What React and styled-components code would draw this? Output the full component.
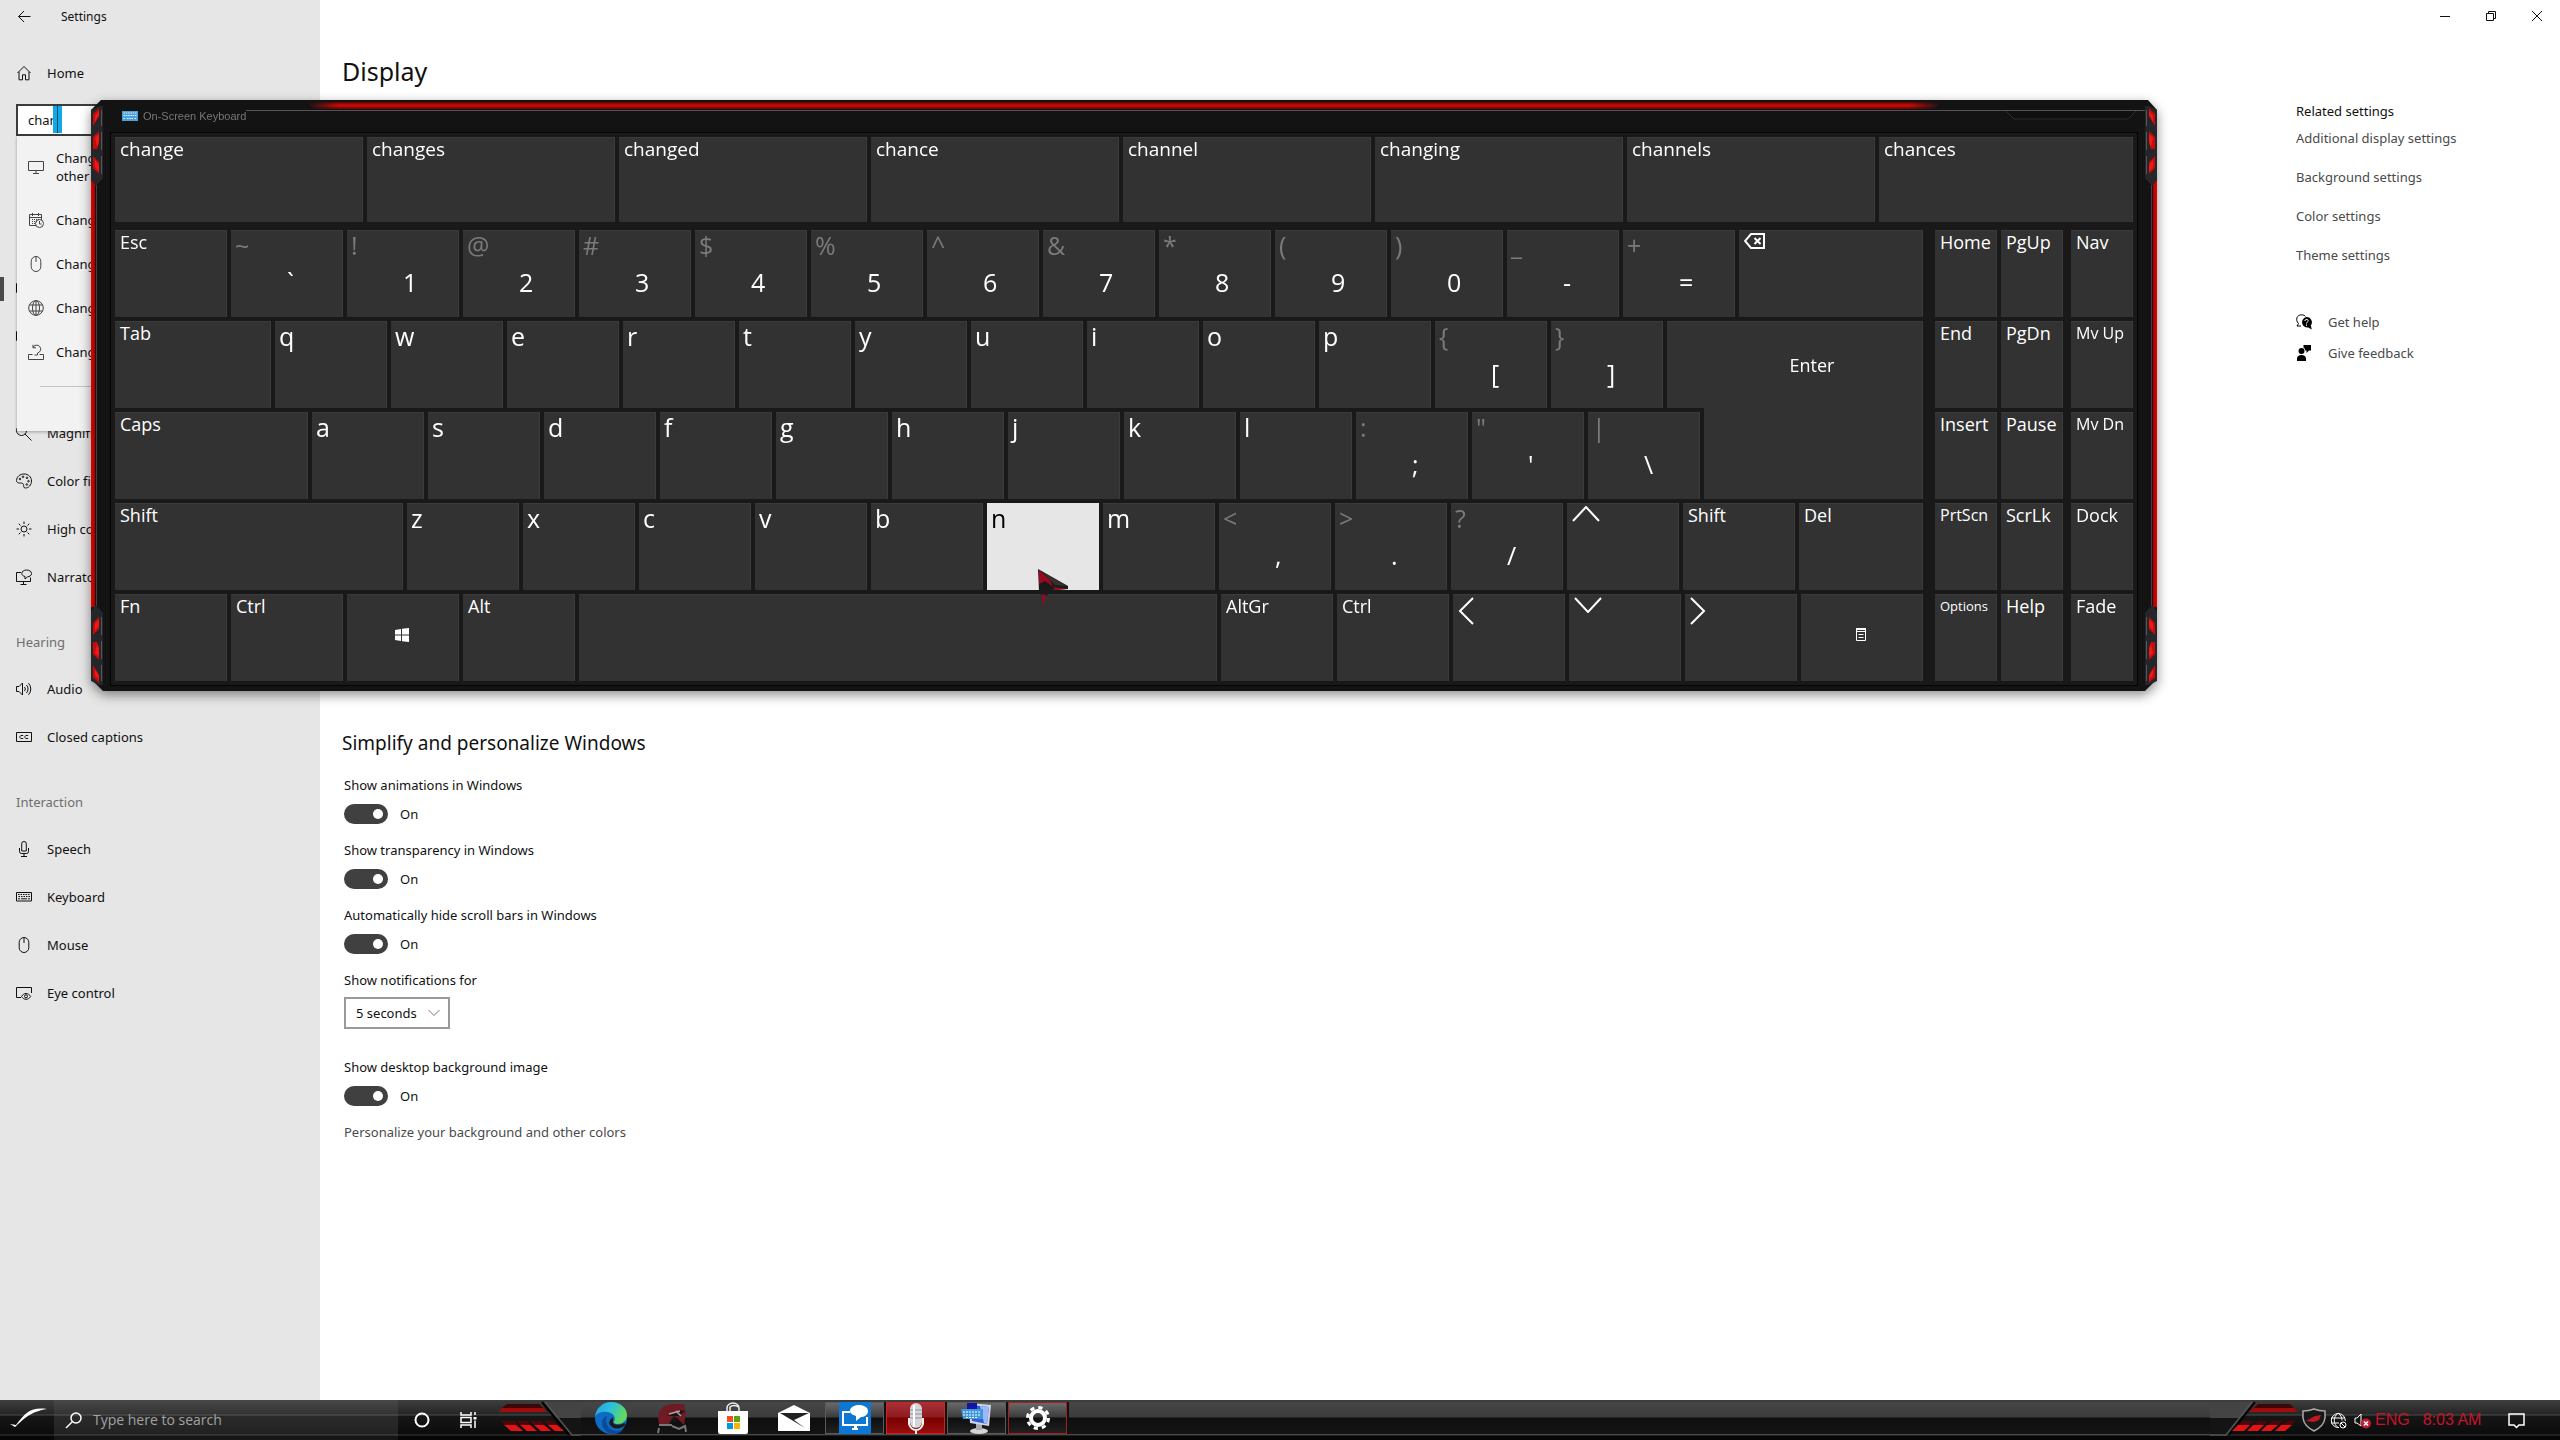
import styled, { createGlobalStyle } from "styled-components";

const GlobalStyle = createGlobalStyle`
  * {
    box-sizing: border-box;
  }
  body {
    margin: 0;
    background: #fff;
    color: #111;
    font-family: "Noto Sans", "Open Sans", sans-serif;
    font-size: 13px;
    line-height: 20px;
  }
  button, input, select {
    font: inherit;
    color: inherit;
    margin: 0;
    padding: 0;
    border: 0;
    background: none;
    border-radius: 0;
  }
  a {
    color: #4a4a4a;
    text-decoration: none;
  }
  h1, h2, h3 {
    margin: 0;
    font-weight: 400;
  }
`;

/* ---------- page ---------- */

const Desktop = styled.div`
  position: relative;
  display: flex;
  flex-direction: column;
  min-height: 100vh;
  overflow: hidden;
`;

const SettingsWindow = styled.div`
  flex: 1;
  display: flex;
`;

const Line = styled.svg`
  display: block;
  flex: none;
  width: ${(p) => p.$w || 16}px;
  height: ${(p) => p.$h || 16}px;
  fill: none;
  stroke: currentColor;
  stroke-width: ${(p) => p.$stroke || 1};
`;

/* ---------- sidebar ---------- */

const Sidebar = styled.aside`
  flex: none;
  width: 320px;
  background: #e6e6e6;
`;

const SidebarTitle = styled.div`
  display: flex;
  align-items: center;
  gap: 29px;
  height: 34px;
  padding-left: 16px;
  font-size: 12px;
`;

const BackButton = styled.button`
  width: 16px;
  height: 16px;
`;

const NavItem = styled.a`
  position: relative;
  display: flex;
  align-items: center;
  gap: 15px;
  height: 48px;
  padding-left: 16px;
  color: #111;
  ${(p) =>
    p.$current &&
    `
    &::before {
      content: "";
      position: absolute;
      left: 0;
      top: 12px;
      width: 4px;
      height: 24px;
      background: #4a4a4a;
    }
  `}
`;

const HomeLink = styled(NavItem)`
  margin-top: 15px;
`;

const NavHeading = styled.h3`
  height: 64px;
  padding: 31px 0 0 16px;
  color: #6e6e6e;
  font-size: 13px;
`;

const Nav = styled.nav`
  margin-top: 129px;
`;

const SearchArea = styled.div`
  position: relative;
  margin: 7px 16px 0;
`;

const SearchInput = styled.input`
  display: block;
  width: 100%;
  height: 32px;
  padding: 0 10px;
  border: 2px solid #3c3c3c;
  background: #fff;
  outline: none;
`;

const Selection = styled.span`
  position: absolute;
  left: 37px;
  top: 2px;
  width: 9px;
  height: 27px;
  background: linear-gradient(90deg, #12a7e6 4px, #0b5070 4px, #0b5070 5px, #12a7e6 5px);
`;

const Suggestions = styled.div`
  position: absolute;
  z-index: 1;
  top: 32px;
  left: 1px;
  right: 0;
  height: 295px;
  padding-top: 5px;
  background: #f2f2f2;
  box-shadow: 0 1px 3px rgba(0, 0, 0, 0.3);
`;

const Suggestion = styled.a`
  display: flex;
  align-items: center;
  gap: 12px;
  height: ${(p) => (p.$tall ? 52 : 44)}px;
  padding-left: 11px;
  color: #111;
  line-height: 18px;
  &:nth-child(2) {
    margin-top: 5px;
  }
  svg {
    color: #444;
  }
`;

const SuggestionRule = styled.hr`
  margin: 12px 24px 0 23px;
  border: 0;
  border-top: 1px solid #c4c4c4;
`;

/* ---------- settings content ---------- */

const Content = styled.main`
  flex: 1;
  display: flex;
  flex-direction: column;
`;

const CaptionBar = styled.div`
  display: flex;
  justify-content: flex-end;
  height: 32px;
`;

const CaptionButton = styled.button`
  display: flex;
  align-items: center;
  justify-content: center;
  width: 46px;
`;

const Columns = styled.div`
  flex: 1;
  display: flex;
  justify-content: space-between;
`;

const Settings = styled.section`
  padding: 21px 0 0 22px;
`;

const PageTitle = styled.h1`
  font-size: 25px;
  line-height: 36px;
`;

const GroupTitle = styled.h2`
  margin-top: 640px;
  margin-bottom: 18px;
  font-size: 19px;
  line-height: 28px;
`;

const Fields = styled.div`
  padding-left: 2px;
`;

const Field = styled.div`
  margin-bottom: ${(p) => p.$after || 16}px;
`;

const FieldLabel = styled.label`
  display: block;
  margin-bottom: ${(p) => p.$gap || 9}px;
`;

const ToggleRow = styled.div`
  display: flex;
  align-items: center;
  gap: 12px;
  height: 20px;
`;

const Toggle = styled.input`
  appearance: none;
  width: 44px;
  height: 20px;
  border-radius: 10px;
  background: #404040;
  display: flex;
  align-items: center;
  justify-content: flex-end;
  padding-right: 5px;
  &::before {
    content: "";
    width: 10px;
    height: 10px;
    border-radius: 50%;
    background: #fff;
  }
`;

const Drop = styled.div`
  display: flex;
  align-items: center;
  width: 106px;
  svg {
    margin-left: -22px;
    color: #777;
    pointer-events: none;
  }
`;

const Select = styled.select`
  appearance: none;
  width: 106px;
  height: 32px;
  padding-left: 10px;
  border: 2px solid #999;
`;

const Related = styled.aside`
  display: flex;
  flex-direction: column;
  gap: 19px;
  width: 264px;
  padding-top: 69px;
`;

const RelatedTitle = styled.h3`
  margin-bottom: -12px;
  font-size: 13px;
`;

const HelpLinks = styled.div`
  display: flex;
  flex-direction: column;
  gap: 11px;
  margin-top: 28px;
  a {
    display: flex;
    align-items: center;
    gap: 16px;
  }
  svg {
    color: #000;
  }
`;

/* ---------- on-screen keyboard ---------- */

const KeyboardWindow = styled.div`
  position: absolute;
  z-index: 2;
  top: 100px;
  left: 91px;
  right: 403px;
  font-family: "Open Sans", "Noto Sans", sans-serif;
  filter: drop-shadow(0 4px 6px rgba(0, 0, 0, 0.45));
`;

const Frame = styled.div`
  padding: 0 19px 5px;
  background: #131313;
  clip-path: polygon(
    10px 0,
    calc(100% - 9px) 0,
    100% 10px,
    100% calc(100% - 12px),
    calc(100% - 12px) 100%,
    12px 100%,
    0 calc(100% - 12px),
    0 10px
  );
`;

const TopGlow = styled.div`
  position: absolute;
  top: 2px;
  left: 216px;
  right: 216px;
  height: 7px;
  background: linear-gradient(#5c0606, #d20a05 50%, #5c0606);
  clip-path: polygon(0 0, 100% 0, calc(100% - 8px) 100%, 8px 100%);
  &::after {
    content: "";
    position: absolute;
    inset: 0;
    background: linear-gradient(90deg, #131313, transparent 32px, transparent calc(100% - 32px), #131313);
  }
`;

const TopRule = styled.div`
  position: absolute;
  top: 10px;
  left: 155px;
  right: 12px;
  height: 1px;
  background: #555059;
`;

const SideGlow = styled.div`
  position: absolute;
  top: 80px;
  bottom: 84px;
  ${(p) => (p.$right ? "right" : "left")}: 0;
  width: 7px;
  background: linear-gradient(
    ${(p) => (p.$right ? 270 : 90)}deg,
    #e00000 0,
    #a80000 4px,
    #131313 4px,
    #131313 5px,
    #4a4043 5px,
    #4a4043 6px,
    #131313 6px
  );
`;

const Hazard = styled.svg`
  position: absolute;
  width: 12px;
  height: 80px;
  ${(p) => (p.$bottom ? "bottom: 6px;" : "top: 6px;")}
  ${(p) => (p.$right ? "right: 0;" : "left: 0;")}
  transform: scale(${(p) => (p.$right ? -1 : 1)}, ${(p) => (p.$bottom ? -1 : 1)});
`;

const TitleNotch = styled.svg`
  position: absolute;
  top: 10px;
  right: 21px;
  width: 130px;
  height: 12px;
`;

const KeyboardTitle = styled.div`
  display: flex;
  align-items: center;
  gap: 5px;
  height: 32px;
  padding-left: 12px;
  color: #777;
  font-family: "Liberation Sans", Arial, sans-serif;
  font-size: 11px;
`;

const KeyArea = styled.div`
  padding: 4px;
  border: 1px solid #050505;
  background: #191919;
`;

const Row = styled.div`
  display: grid;
  grid-template-columns: ${(p) => p.$cols};
  grid-auto-rows: ${(p) => p.$height || 87}px;
  gap: 4px;
`;

const PredictionRow = styled(Row)`
  margin-bottom: 8px;
`;

const Board = styled.div`
  display: flex;
  gap: 8px;
`;

const MainKeys = styled.div`
  flex: 1;
  display: flex;
  flex-direction: column;
  gap: 4px;
  margin-right: 4px;
`;

const SidePad = styled(Row)`
  flex: none;
`;

const Key = styled.button`
  position: relative;
  display: flex;
  flex-direction: column;
  align-items: ${(p) => (p.$center ? "center" : "flex-start")};
  justify-content: ${(p) => (p.$center ? "center" : "flex-start")};
  padding: ${(p) => (p.$center ? "0 2px 6px 0" : "0 0 0 5px")};
  background: ${(p) => (p.$pressed ? "#e6e6e6" : "#323232")};
  color: ${(p) => (p.$pressed ? "#000" : "#fff")};
  box-shadow: ${(p) => (p.$pressed ? "none" : "inset 0 1px #3b3b3b, inset -1px 0 #3b3b3b")};
  font-size: ${(p) => p.$size || 18}px;
  line-height: 24px;
  text-align: left;
  white-space: nowrap;
`;

const CharKey = styled(Key)`
  padding-left: 4px;
  font-size: 25px;
  line-height: 30px;
`;

const Shifted = styled.span`
  color: #7b7b7b;
`;

const Base = styled.span`
  height: 30px;
  margin-top: 7px;
  padding-left: 52px;
`;

// the lower half reaches into the row below
const EnterKey = styled(Key)`
  padding: 0 0 0 34px;
  &::after {
    content: "";
    position: absolute;
    top: 100%;
    right: 0;
    width: calc(100% - 37px);
    height: 91px;
    background: #323232;
    box-shadow: inset -1px 0 #3b3b3b;
  }
`;

const Pointer = styled.svg`
  position: absolute;
  z-index: 3;
  top: 569px;
  left: 1038px;
  width: 31px;
  height: 38px;
`;

/* ---------- taskbar ---------- */

const Taskbar = styled.footer`
  position: relative;
  display: flex;
  align-items: stretch;
  height: 40px;
  background: linear-gradient(#3e3e3e 0, #262626 14px, #4c4c4c 15px, #161616 16px, #0c0c0c 34px, #3a3a3a 35px, #060606 36px);
  color: #fff;
`;

const StartButton = styled.button`
  width: 54px;
  padding-left: 4px;
`;

const TaskSearch = styled.label`
  display: flex;
  align-items: center;
  gap: 11px;
  width: 344px;
  padding-left: 11px;
  background: linear-gradient(#484848 0, #343434 14px, #585858 15px, #2a2a2a 16px, #222 34px, #484848 35px, #161616 36px);
  font-family: "Open Sans", "Noto Sans", sans-serif;
  input {
    flex: 1;
    font-size: 14px;
    outline: none;
  }
  input::placeholder {
    color: #a2a2a2;
    opacity: 1;
  }
`;

const TaskButton = styled.button`
  display: flex;
  align-items: center;
  justify-content: center;
  width: 47px;
`;

const Stripes = styled.svg`
  flex: none;
  width: ${(p) => p.$w}px;
  height: 40px;
`;

const Apps = styled.div`
  flex: 1;
  display: flex;
  margin: 2px 0 5px;
  border-bottom: 1px solid #4a4a4a;
  background: linear-gradient(#464646 0, #3c3c3c 15px, #0e0e0e 16px, #141414 100%);
`;

const App32 = styled.button`
  display: flex;
  align-items: center;
  justify-content: center;
  width: 61px;
  border-right: 2px solid transparent;
  svg {
    width: 32px;
    height: 32px;
  }
  ${(p) =>
    p.$open &&
    `
    border-right-color: #101010;
    box-shadow: inset 0 0 0 1px #5a5a5a;
    background: linear-gradient(#6c6c6c 0, #3c3c3c 15px, #0e0e0e 16px, #222 100%);
  `}
  ${(p) =>
    p.$alert &&
    `
    box-shadow: inset 0 0 0 1px #c22;
    background: linear-gradient(#a83238 0, #8e1a1e 15px, #780000 16px, #9c1010 100%);
  `}
  ${(p) => p.$active && `box-shadow: inset 0 0 0 1px #a32020;`}
`;

const Tray = styled.div`
  display: flex;
  align-items: center;
  width: 258px;
  color: #c4142a;
  font-family: "Liberation Sans", Arial, sans-serif;
  font-size: 16px;
  svg {
    color: #fff;
  }
`;

const TrayText = styled.span`
  margin-left: ${(p) => p.$gap}px;
`;

const TrayIcon = styled.button`
  margin-left: ${(p) => p.$gap}px;
`;

/* ---------- icons ---------- */

const icons = {
  home: <path d="M1.5 8 8 1.5 14.5 8M3 6.8v8h3.500v-5h3v5H13v-8" />,
  monitor: <path d="M.5 2.500h15v9H.5zM8 11.500v2.500M5 14.500h6" />,
  calendar: (
    <>
      <path d="M8 13.500H1.500v-11h12V8M1.500 5.500h12M4.500 1v3M10.500 1v3" />
      <path d="M4 7.500h7M4 9.500h5M4 11.500h4" strokeDasharray="1 1" />
      <circle cx="11.500" cy="11.500" r="4" />
      <path d="M11.500 9v3h2" />
    </>
  ),
  mouse: <path d="M8 .5a4.800 4.800 0 0 1 4.800 4.800v5.400a4.800 4.800 0 0 1-9.600 0V5.300A4.800 4.800 0 0 1 8 .5zM8 .5v5.500" />,
  globe: (
    <>
      <circle cx="8" cy="8" r="7.300" />
      <ellipse cx="8" cy="8" rx="3.500" ry="7.300" />
      <path d="M1.500 5h13M1.500 11h13M8 .7v14.600" />
    </>
  ),
  reset: <path d="M4.500 10.500H.5v5h15v-5h-4M5 3.500A4 4 0 1 1 9.500 9v2h-3M5 .8v3h3" />,
  magnifier: (
    <>
      <circle cx="5.500" cy="5.500" r="5" />
      <path d="m9 9 6.500 6.500" />
    </>
  ),
  palette: (
    <>
      <path d="M8 1c4.500 0 7.500 3 7.500 7s-3 7-6 7c-2.500 0-1.500-2-2-3.500S5 10 3.500 10 .5 9.500.5 7.500C.8 3.500 4 1 8 1z" />
      <circle cx="4" cy="6" r=".8" />
      <circle cx="7" cy="3.800" r=".8" />
      <circle cx="11" cy="4.800" r=".8" />
      <circle cx="12.500" cy="8.200" r=".8" />
      <circle cx="10.800" cy="11.500" r=".8" />
    </>
  ),
  sun: (
    <>
      <circle cx="8" cy="8" r="3" />
      <path d="M8 .5v2.500M8 13v2.500M.5 8H3M13 8h2.500M2.700 2.700l1.800 1.800M11.500 11.500l1.800 1.800M2.700 13.300l1.800-1.800M11.500 4.500l1.800-1.800" />
    </>
  ),
  narrator: <path d="M5 3.500H.5v9h14V8.500M7.500 12.500V15M4.500 15.500h6M10.500 1C13.500 1 15.500 2.500 15.500 4.500s-2 3.300-4 3.300L9 10V7.500C7 7 5.800 6 5.800 4.500 5.800 2.500 8 1 10.500 1z" />,
  audio: <path d="M.5 5.500H3L6.500 2v12L3 10.500H.5zM8.500 6a3 3 0 0 1 0 4M10.500 4a6 6 0 0 1 0 8M12.500 2.200a8.500 8.500 0 0 1 0 11.600" />,
  captions: <path d="M.5 3.500h15v9H.5zM7.200 6.500H4.800L4 7.300v1.400l.8.8h2.400M12.200 6.500H9.800L9 7.300v1.400l.8.8h2.400" />,
  mic: <path d="M8 .5A2.300 2.300 0 0 1 10.300 3v7H5.700V3A2.300 2.300 0 0 1 8 .5zM3.500 7v3.500a2 2 0 0 0 2 2h5a2 2 0 0 0 2-2V7M8 12.500v2.500M5 15.500h6" />,
  keyboard: (
    <>
      <path d="M.5 3.500h15v8.500H.5z" />
      <path d="M2 5.500h12M2.500 7.500h11.500" strokeDasharray="1.500 1" />
      <path d="M2 9.800h2M5 9.800h6M12 9.800h2" />
    </>
  ),
  eye: (
    <>
      <path d="M5 12.500H.5v-10h15V8" />
      <path d="M5.500 11.500c1.200-2 2.800-3 4.500-3s3.500 1 4.700 3c-1.200 1.800-2.900 2.800-4.700 2.800s-3.300-1-4.500-2.800z" />
      <circle cx="10" cy="11.300" r="1.500" />
    </>
  ),
};

const Icon = ({ name }) => (
  <Line viewBox="0 0 16 16" aria-hidden="true">
    {icons[name]}
  </Line>
);

/* ---------- data ---------- */

const vision = [
  ["magnifier", "Magnifier"],
  ["palette", "Color filters"],
  ["sun", "High contrast"],
  ["narrator", "Narrator"],
];
const hearing = [
  ["audio", "Audio"],
  ["captions", "Closed captions"],
];
const interaction = [
  ["mic", "Speech"],
  ["keyboard", "Keyboard"],
  ["mouse", "Mouse"],
  ["eye", "Eye control"],
];

const predictions = ["change", "changes", "changed", "chance", "channel", "changing", "channels", "chances"];

const numberKeys = ["~`", "!1", "@2", "#3", "$4", "%5", "^6", "&7", "*8", "(9", ")0", "_-", "+="];

const pairPad = [
  ["Home"], ["PgUp"],
  ["End"], ["PgDn"],
  ["Insert"], ["Pause"],
  ["PrtScn", 16], ["ScrLk"],
  ["Options", 13], ["Help"],
];
const lastPad = [["Nav"], ["Mv Up", 16], ["Mv Dn", 16], ["Dock"], ["Fade"]];

const NavGroup = ({ items }) =>
  items.map(([icon, label]) => (
    <NavItem href="#" key={label}>
      <Icon name={icon} />
      {label}
    </NavItem>
  ));

const ToggleField = ({ id, label }) => (
  <Field>
    <FieldLabel htmlFor={id}>{label}</FieldLabel>
    <ToggleRow>
      <Toggle type="checkbox" id={id} defaultChecked />
      <span>On</span>
    </ToggleRow>
  </Field>
);

const Letters = ({ keys, pressed }) =>
  keys.split("").map((k) => (
    <CharKey key={k} $pressed={k === pressed}>
      {k}
    </CharKey>
  ));

const Doubles = ({ keys }) =>
  keys.map(([top, base]) => (
    <CharKey key={base}>
      <Shifted>{top}</Shifted>
      <Base>{base}</Base>
    </CharKey>
  ));

const ArrowLine = styled(Line)`
  margin-top: 3px;
`;

const Arrow = ({ label, w, h, d }) => (
  <Key aria-label={label}>
    <ArrowLine $w={w} $h={h} $stroke={2} viewBox={`0 0 ${w} ${h}`}>
      <path d={d} />
    </ArrowLine>
  </Key>
);

const CornerHazard = (props) => (
  <Hazard viewBox="0 0 12 80" {...props}>
    <path d="M0 4 8 0h4v72L5 80 0 74z" fill="#24262a" />
    <path d="M2 8 8 2v8L2 20zM2 31l6-6v12l-2 6H2zM2 50l6 6v12L2 62z" fill="#c90a0a" />
    <path d="M4 10l4-5v4l-4 7zM4 32l4-4v8l-2 5zM4 54l4 5v7l-4-5z" fill="#f11818" />
    <path d="M10.500 4v16M10.500 26v18M10.500 50v18" stroke="#5b5557" />
  </Hazard>
);

/* ---------- parts ---------- */

const SettingsSidebar = () => (
  <Sidebar>
    <SidebarTitle>
      <BackButton aria-label="Back">
        <Line viewBox="0 0 16 16">
          <path d="M14.500 7.500h-12M8 2 2.500 7.500 8 13" />
        </Line>
      </BackButton>
      Settings
    </SidebarTitle>
    <HomeLink href="#">
      <Icon name="home" />
      Home
    </HomeLink>
    <SearchArea>
      <SearchInput aria-label="Find a setting" defaultValue="chan" />
      <Selection />
      <Suggestions>
        <Suggestion href="#" $tall>
          <Icon name="monitor" />
          <span>
            Change
            <br />
            other
          </span>
        </Suggestion>
        {["calendar", "mouse", "globe", "reset"].map((icon) => (
          <Suggestion href="#" key={icon}>
            <Icon name={icon} />
            Change
          </Suggestion>
        ))}
        <SuggestionRule />
      </Suggestions>
    </SearchArea>
    <Nav>
      <NavItem href="#" $current aria-label="Display">
        <Icon name="monitor" />
      </NavItem>
      <NavItem href="#" aria-label="Mouse pointer">
        <Icon name="monitor" />
      </NavItem>
      <NavItem href="#" aria-label="Text cursor" />
      <NavGroup items={vision} />
      <NavHeading>Hearing</NavHeading>
      <NavGroup items={hearing} />
      <NavHeading>Interaction</NavHeading>
      <NavGroup items={interaction} />
    </Nav>
  </Sidebar>
);

const SettingsContent = () => (
  <Content>
    <CaptionBar>
      <CaptionButton aria-label="Minimize">
        <Line $w={10} $h={10} viewBox="0 0 10 10">
          <path d="M0 5.500h10" />
        </Line>
      </CaptionButton>
      <CaptionButton aria-label="Restore">
        <Line $w={10} $h={10} viewBox="0 0 10 10">
          <path d="M.5 2.500h7v7h-7zM2.500 2.500v-2h7v7h-2" />
        </Line>
      </CaptionButton>
      <CaptionButton aria-label="Close">
        <Line $w={10} $h={10} viewBox="0 0 10 10">
          <path d="m0 0 10 10M10 0 0 10" />
        </Line>
      </CaptionButton>
    </CaptionBar>
    <Columns>
      <Settings>
        <PageTitle>Display</PageTitle>
        <GroupTitle>Simplify and personalize Windows</GroupTitle>
        <Fields>
          <ToggleField id="animations" label="Show animations in Windows" />
          <ToggleField id="transparency" label="Show transparency in Windows" />
          <ToggleField id="scrollbars" label="Automatically hide scroll bars in Windows" />
          <Field $after={28}>
            <FieldLabel htmlFor="notifications" $gap={7}>
              Show notifications for
            </FieldLabel>
            <Drop>
              <Select id="notifications">
                <option>5 seconds</option>
              </Select>
              <Line $w={12} $h={8} viewBox="0 0 12 8">
                <path d="m.5 1 5.500 5.500L11.500 1" />
              </Line>
            </Drop>
          </Field>
          <ToggleField id="background" label="Show desktop background image" />
          <a href="#">Personalize your background and other colors</a>
        </Fields>
      </Settings>
      <Related>
        <RelatedTitle>Related settings</RelatedTitle>
        <a href="#">Additional display settings</a>
        <a href="#">Background settings</a>
        <a href="#">Color settings</a>
        <a href="#">Theme settings</a>
        <HelpLinks>
          <a href="#">
            <Line viewBox="0 0 16 16">
              <path d="M2.500 9.500C-1 6 .8.800 5.500.800c2 0 3.300.7 4 1.700M2.500 9.500 1 12h4" />
              <path d="M10.500 3a5.300 5.300 0 0 1 4.300 8.500l1 4-3.500-2A5.300 5.300 0 1 1 10.500 3z" fill="#000" stroke="none" />
              <path d="M8.800 7c.2-2.300 3.600-2 3.400 0-.1 1-1.700 1.200-1.700 2.500M10.500 10.500v1.300" stroke="#fff" />
            </Line>
            Get help
          </a>
          <a href="#">
            <Line viewBox="0 0 16 16">
              <path d="M1 16v-2.500C1 11.500 2.800 10 5.500 10s4.500 1.500 4.500 3.500V16zM5.500 3a3 3 0 1 1 0 6 3 3 0 0 1 0-6zM7.500 0H15v5.500h-2L10.500 8V5.500H9.300A4 4 0 0 0 7.500 2.500z" fill="#000" stroke="none" />
            </Line>
            Give feedback
          </a>
        </HelpLinks>
      </Related>
    </Columns>
  </Content>
);

const OnScreenKeyboard = () => (
  <KeyboardWindow>
    <Frame>
      <KeyboardTitle>
        <svg width="16" height="10" viewBox="0 0 16 10">
          <path d="M0 0h16v10H0z" fill="#4a9fdc" />
          <path d="M1.500 2h13M1.500 4.500h13M1.500 7.500h2M5 7.500h6M12.500 7.500h2" stroke="#e6f4ff" strokeDasharray="1.500 .8" />
        </svg>
        On-Screen Keyboard
      </KeyboardTitle>
      <KeyArea>
        <PredictionRow $cols="repeat(7, 248fr) 254fr" $height={85}>
          {predictions.map((word) => (
            <Key key={word} $size={19}>
              {word}
            </Key>
          ))}
        </PredictionRow>
        <Board>
          <MainKeys>
            <Row $cols="repeat(14, 112fr) 184fr">
              <Key>Esc</Key>
              <Doubles keys={numberKeys} />
              <Key aria-label="Backspace">
                <ArrowLine $w={21} $h={16} viewBox="0 0 21 16" $stroke={2}>
                  <path d="M7 1h13v14H7L1 8zM10.500 5l6 6M16.500 5l-6 6" />
                </ArrowLine>
              </Key>
            </Row>
            <Row $cols="156fr repeat(12, 112fr) 256fr">
              <Key>Tab</Key>
              <Letters keys="qwertyuiop" />
              <Doubles keys={["{[", "}]"]} />
              <EnterKey $center>Enter</EnterKey>
            </Row>
            <Row $cols="193fr repeat(12, 112fr) 219fr">
              <Key>Caps</Key>
              <Letters keys="asdfghjkl" />
              <Doubles keys={[":;", "\"'", "|\\"]} />
            </Row>
            <Row $cols="288fr repeat(12, 112fr) 124fr">
              <Key>Shift</Key>
              <Letters keys="zxcvbnm" pressed="n" />
              <Doubles keys={["<,", ">.", "?/"]} />
              <Arrow label="Up" w={28} h={16} d="M1 15 14 1l13 14" />
              <Key>Shift</Key>
              <Key>Del</Key>
            </Row>
            <Row $cols="repeat(4, 112fr) 638fr repeat(5, 112fr) 122fr">
              <Key>Fn</Key>
              <Key>Ctrl</Key>
              <Key $center aria-label="Windows">
                <svg width="14" height="14" viewBox="0 0 14 14">
                  <path d="M0 2l6-1v5.500H0zM7 .800 14 0v6.500H7zM0 7.500h6V13l-6-1zM7 7.500h7V14l-7-.8z" fill="#fff" />
                </svg>
              </Key>
              <Key>Alt</Key>
              <Key aria-label="Space" />
              <Key>AltGr</Key>
              <Key>Ctrl</Key>
              <Arrow label="Left" w={16} h={28} d="M15 1 2 14l13 13" />
              <Arrow label="Down" w={28} h={16} d="M1 1l13 14L27 1" />
              <Arrow label="Right" w={16} h={28} d="M1 1l13 13L1 27" />
              <Key $center aria-label="Menu">
                <svg width="10" height="13" viewBox="0 0 10 13">
                  <path d="M.5.500h9v12h-9zM0 3.500h10M2.500 6.500h5M2.500 9.500h5" fill="none" stroke="#fff" />
                  <path d="M0 0h10v2H0z" fill="#fff" />
                </svg>
              </Key>
            </Row>
          </MainKeys>
          <SidePad $cols="62px 62px">
            {pairPad.map(([label, size]) => (
              <Key key={label} $size={size}>
                {label}
              </Key>
            ))}
          </SidePad>
          <SidePad $cols="62px">
            {lastPad.map(([label, size]) => (
              <Key key={label} $size={size}>
                {label}
              </Key>
            ))}
          </SidePad>
        </Board>
      </KeyArea>
    </Frame>
    <TopGlow />
    <TopRule />
    <TitleNotch viewBox="0 0 130 12">
      <path d="M0 1h130l-8 8H8z" fill="#101010" />
      <path d="M0 1l8 8h114l8-8" fill="none" stroke="#2c2c2c" />
    </TitleNotch>
    <SideGlow />
    <SideGlow $right />
    <CornerHazard />
    <CornerHazard $right />
    <CornerHazard $bottom />
    <CornerHazard $right $bottom />
  </KeyboardWindow>
);

const LeftStripes = () => (
  <Stripes $w={89} viewBox="3 0 89 40">
    <path d="M56 2h36v33H82z" fill="#141414" />
    <path d="M56 2h36v16H67z" fill="#444" />
    <path d="M56 2l27 33h9" fill="none" stroke="#555" strokeWidth="1.500" />
    <path d="M53 2l27 33" stroke="#000" strokeWidth="2" />
    <path d="M10 11l8-7h32l8 8H11z" fill="#a00c0c" />
    <path d="M13 8l5-4h32l4 4z" fill="#3a0808" />
    <path d="M12 21h14l8 10H22zM28 21h10l10 10H37zM41 21h11l10 10H51zM55 21h9l11 10H65z" fill="#4c0808" />
    <path d="M15 25h12l7 6H22zM31 25h10l7 6H38zM45 25h10l7 6H52zM59 25h9l7 6H66z" fill="#e01414" />
  </Stripes>
);

const RightStripes = () => (
  <Stripes $w={92} viewBox="0 0 92 40">
    <path d="M0 2h42L16 35H0z" fill="#141414" />
    <path d="M0 2h42L30 18H0z" fill="#444" />
    <path d="M42 2 16 35H0" fill="none" stroke="#555" strokeWidth="1.500" />
    <path d="M45 2 19 35" stroke="#000" strokeWidth="2" />
    <path d="M40 11l8-7h32l8 8H40z" fill="#a00c0c" />
    <path d="M44 8l4-4h32l4 4z" fill="#3a0808" />
    <path d="M32 21h12L34 31H22zM48 21h10L48 31H37zM62 21h11L61 31H51zM77 21h9L75 31H65z" fill="#4c0808" />
    <path d="M28 25h12l-6 6H22zM43 25h11l-6 6H37zM57 25h11l-7 6H51zM71 25h11l-7 6H65z" fill="#e01414" />
  </Stripes>
);

const WindowsTaskbar = () => (
  <Taskbar>
    <StartButton aria-label="Start">
      <svg width="40" height="24" viewBox="0 0 40 24">
        <path d="M1 18l5 3C14 14 20 6 38 3 22 1 17 6 7 19z" fill="#fff" />
      </svg>
    </StartButton>
    <TaskSearch>
      <Line $w={17} $h={17} $stroke={1.5} viewBox="0 0 17 17">
        <circle cx="11" cy="6" r="5" />
        <path d="M7.500 9.500 1 16" />
      </Line>
      <input placeholder="Type here to search" aria-label="Search" />
    </TaskSearch>
    <TaskButton aria-label="Cortana">
      <Line $w={16} $h={16} $stroke={2} viewBox="0 0 16 16">
        <circle cx="8" cy="8" r="6.500" />
      </Line>
    </TaskButton>
    <TaskButton aria-label="Task view">
      <Line $w={17} $h={16} viewBox="0 0 17 16" $stroke={1.5}>
        <path d="M1 0v3h10V0M1 5.500h10v5H1zM1 16v-3h10v3M15 0v3M15 8.500V16" />
        <path d="M13.500 5h3v2.500h-3z" fill="#fff" stroke="none" />
      </Line>
    </TaskButton>
    <LeftStripes />
    <Apps>
      <App32 aria-label="Edge">
        <svg viewBox="0 0 32 32">
          <defs>
            <linearGradient id="edgeTop" x1="0" x2="1" y1="0" y2=".4">
              <stop offset="0" stopColor="#1f9fe0" />
              <stop offset=".5" stopColor="#2cc0dd" />
              <stop offset="1" stopColor="#62d95c" />
            </linearGradient>
          </defs>
          <circle cx="16" cy="16" r="16" fill="#0f6ac2" />
          <path d="M0 15C1 6 8 0 16 0c9 0 16 6 16 13 0 6-5 9-9 9-3 0-5-1-4-2.500C21 17 20 11 12 10 6 9 1 12 0 15z" fill="url(#edgeTop)" />
          <path d="M12 14c-3 7 2 15 10 15 3 0 5-1 7-3-4 8-15 8-20 1-4-6-1-12 3-13z" fill="#0a4a9a" />
          <path d="M18 19c-1 3 4 5 9 3 2-1 4-1 3 1-3 4-10 5-14 1-3-3-2-6 2-9z" fill="#1b1b1b" />
        </svg>
      </App32>
      <App32 aria-label="Armoury Crate">
        <svg viewBox="0 0 32 32">
          <path d="M2 16C2 7 9 2 17 2h11l2 9-2 12-8-8-8 8-9-1z" fill="#6e1b24" />
          <path d="M11 14l13-6 5 1-6 5zM13 21l5-7 5 5z" fill="#191517" />
          <path d="M13 12l11-3M20 9l5 5" stroke="#b9a0a2" strokeWidth="1.500" />
          <path d="M3 23h13M3 26l-1 5M16 24l7 3 6-3 1 6" stroke="#777" fill="none" strokeWidth="2" />
        </svg>
      </App32>
      <App32 aria-label="Store">
        <svg viewBox="0 0 32 32">
          <path d="M10 9V6a6 5 0 0 1 12 0v3M13 9V5a5 4 0 0 1 8 0" fill="none" stroke="#eee" strokeWidth="1.500" />
          <path d="M1 9h30v21q0 2-2 2H3q-2 0-2-2z" fill="#fff" />
          <path d="M10 14h6v6h-6z" fill="#f25022" />
          <path d="M17 14h6v6h-6z" fill="#5fa30a" />
          <path d="M10 21h6v6h-6z" fill="#0098e0" />
          <path d="M17 21h6v6h-6z" fill="#fdb400" />
        </svg>
      </App32>
      <App32 aria-label="Mail">
        <svg viewBox="0 0 32 32">
          <path d="M0 11 16 3l16 8v18H0z" fill="#fff" />
          <path d="M2 11h29L16 18l11 8z" fill="#222" />
        </svg>
      </App32>
      <App32 aria-label="Connect" $open>
        <svg viewBox="0 0 32 32">
          <path d="M0 0h32v32H0z" fill="#0c78d4" />
          <path d="M11 10H4v13h24v-8M13 27h6" fill="none" stroke="#fff" strokeWidth="2" />
          <path d="M15 23h3v5h-3z" fill="#fff" />
          <path d="M20 3c5 0 9 2.500 9 6s-3 6-7 6l-5 4v-5c-4-1-6-3-6-5 0-3.500 4-6 9-6z" fill="#fff" />
        </svg>
      </App32>
      <App32 aria-label="Speech recognition" $open $alert>
        <svg viewBox="0 0 32 32">
          <rect x="10" y="1" width="12" height="25" rx="6" fill="#d4d6da" />
          <path d="M10 8h12M10 12h12M10 16h12" stroke="#8f9399" />
          <path d="M14 3v22" stroke="#fff" strokeWidth="2" />
          <path d="M9 16v6q2 6 7 6t7-6v-6M16 28v4" fill="none" stroke="#f0f0f0" strokeWidth="2" />
        </svg>
      </App32>
      <App32 aria-label="On-Screen Keyboard" $open>
        <svg viewBox="0 0 32 32">
          <ellipse cx="18" cy="29" rx="9" ry="3" fill="#d5d5d5" />
          <path d="M15 22h6v6h-6z" fill="#aaa" />
          <path d="M8 1l22 2-2 21-19-3z" fill="#d0d6e6" />
          <path d="M10 3l18 2-2 17-15-3z" fill="#315fd8" />
          <path d="M19 4l9 1-2 17-3-1z" fill="#9db9f5" />
          <path d="M6 1h10v6H6z" fill="#1515a5" />
          <path d="M0 7h22v10H2z" fill="#3f97de" />
          <path d="M2 10h18M2 13h18M5 15.500h12" stroke="#fff" strokeDasharray="2 1" />
        </svg>
      </App32>
      <App32 aria-label="Settings" $open $active>
        <svg viewBox="0 0 32 32">
          <circle cx="16" cy="16" r="7" fill="none" stroke="#fff" strokeWidth="4" />
          <circle cx="16" cy="16" r="10.500" fill="none" stroke="#fff" strokeWidth="3" strokeDasharray="4.200 4.050" />
        </svg>
      </App32>
    </Apps>
    <RightStripes />
    <Tray>
      <TrayIcon $gap={0} aria-label="Armoury">
        <Line $w={24} $h={24} $stroke={1.5} viewBox="0 0 24 24">
          <path d="M12 1q5 2 11 2v7q-1 8-11 13Q2 18 1 10V3q6 0 11-2z" fill="#171717" stroke="#aaa" />
          <path d="M4 13l9-5 6-1-2 5-5 2z" fill="#c01822" stroke="none" />
        </Line>
      </TrayIcon>
      <TrayIcon $gap={4} aria-label="Network">
        <Line $w={17} $h={17} viewBox="0 0 17 17">
          <path d="M9 15.500A7 7 0 1 1 15.300 9M8 1c-5 4-5 11 0 14.500M8 1c3 2 4 5 4 7.500M1 6h14M1 11h8" />
          <circle cx="13" cy="13" r="3" />
          <path d="m11 11 4 4" />
        </Line>
      </TrayIcon>
      <TrayIcon $gap={7} aria-label="Volume">
        <Line $w={17} $h={17} viewBox="0 0 17 17">
          <path d="M1 6h2l4-4v12l-4-3H1z" />
          <circle cx="12" cy="11.500" r="5" fill="#c21c32" stroke="none" />
          <path d="m10 9.500 4 4M14 9.500l-4 4" strokeWidth="1.500" />
        </Line>
      </TrayIcon>
      <TrayText $gap={4}>ENG</TrayText>
      <TrayText $gap={13}>8:03 AM</TrayText>
      <TrayIcon $gap={27} aria-label="Notifications">
        <Line $w={17} $h={17} $stroke={1.5} viewBox="0 0 17 17">
          <path d="M1 2h15v11h-5l-2.500 2.500L6 13H1z" />
        </Line>
      </TrayIcon>
    </Tray>
  </Taskbar>
);

const App = () => {
  return (
    <Desktop>
      <GlobalStyle />
      <SettingsWindow>
        <SettingsSidebar />
        <SettingsContent />
      </SettingsWindow>
      <OnScreenKeyboard />
      <Pointer viewBox="0 0 31 38">
        <path d="M0 0l30 17v3l-16 1-6 6H4l-3-5z" fill="#1b1a1a" />
        <path d="M1 1l11 10 3 7-8-6-6 3z" fill="#9a0820" />
        <path d="M3 2l26 15-12-1z" fill="#34322e" />
        <path d="M15 18l14 2-11 1zM4 25l4 1-3 12z" fill="#9a0a20" />
      </Pointer>
      <WindowsTaskbar />
    </Desktop>
  );
};

export default App;
